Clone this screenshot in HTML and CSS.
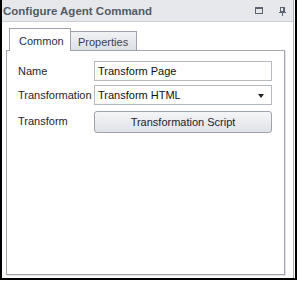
FILE: index.html
```html
<!DOCTYPE html>
<html>
<head>
<meta charset="utf-8">
<link rel="stylesheet" href="styles.css">
</head>
<body>
<div class="window">
  <div class="inner">
    <div class="titlebar">
      <span class="title">Configure Agent Command</span>
      <span class="tools">
        <svg class="ico" width="8" height="7" viewBox="0 0 8 7"><rect x="0.5" y="0.5" width="7" height="6" fill="none" stroke="#5d6471"/><rect x="0" y="0" width="8" height="2" fill="#5d6471"/></svg>
        <svg class="ico pin" width="7" height="9" viewBox="0 0 7 9"><rect x="1.5" y="0.5" width="4" height="4" fill="none" stroke="#5d6471"/><rect x="4" y="1" width="1" height="4" fill="#5d6471"/><rect x="0" y="5" width="7" height="1" fill="#5d6471"/><rect x="3" y="6" width="1" height="3" fill="#5d6471"/></svg>
      </span>
    </div>
    <div class="content">
      <div class="tabs">
        <div class="tab active">Common</div>
        <div class="tab">Properties</div>
      </div>
      <div class="panel">
        <div class="form">
          <label class="lbl">Name</label>
          <div class="field">Transform Page</div>
          <label class="lbl">Transformation</label>
          <div class="field select">Transform HTML<span class="arrow"></span></div>
          <label class="lbl">Transform</label>
          <div class="button">Transformation Script</div>
        </div>
      </div>
    </div>
  </div>
</div>
</body>
</html>
```
FILE: styles.css
```css
html, body {
  margin: 0;
  padding: 0;
  background: #ffffff;
}
body {
  font-family: "Liberation Sans", Arial, sans-serif;
  font-size: 11px;
  color: #1c1c1c;
}
.window {
  width: 293px;
  height: 278px;
  border-left: 2px solid #000;
  border-right: 2px solid #000;
  border-bottom: 2px solid #000;
  display: flex;
}
.inner {
  width: 291px;
  border-right: 1px solid #a9adb5;
  display: flex;
  flex-direction: column;
}
.titlebar {
  height: 21px;
  background: #e6e8ec;
  border-bottom: 1px solid #cdd0d6;
  display: flex;
  align-items: center;
  justify-content: space-between;
  padding: 0 7px 0 1px;
}
.title {
  font-weight: bold;
  font-size: 11.5px;
  color: #525a68;
}
.tools {
  display: flex;
  align-items: center;
  gap: 16px;
}
.ico { display: block; }
.pin { margin-top: 2px; }
.content {
  flex: 1;
  padding: 6px 8px 3px 4px;
  display: flex;
  flex-direction: column;
}
.tabs {
  display: flex;
  align-items: flex-end;
  padding-left: 3px;
  margin-bottom: -1px;
  position: relative;
  z-index: 1;
}
.tab {
  box-sizing: border-box;
  border: 1px solid #9fa2aa;
  border-bottom: none;
  font-size: 11px;
  color: #2a2f3a;
}
.tab.active {
  width: 62px;
  height: 23px;
  background: #fff;
  padding: 6px 0 0 9px;
}
.tab:not(.active) {
  width: 66px;
  height: 20px;
  border-left: none;
  border-bottom: 1px solid #9fa2aa;
  background: linear-gradient(#f1f2f5, #dcdfe5);
  padding: 4px 0 0 7px;
  color: #3c4250;
}
.panel {
  flex: 1;
  border: 1px solid #a4a7af;
  box-shadow: 1px 1px 0 #dfe0e3;
  padding: 10px 11px 0 11px;
}
.form {
  display: grid;
  grid-template-columns: 76px 178px;
  row-gap: 4px;
  align-items: center;
}
.lbl {
  font-size: 11px;
  color: #1f2430;
}
.field {
  box-sizing: border-box;
  height: 20px;
  border: 1px solid #b5b8bf;
  padding: 3px 0 0 3px;
  font-size: 11px;
  color: #111;
  position: relative;
}
.arrow {
  position: absolute;
  right: 7px;
  top: 8px;
  width: 0;
  height: 0;
  border-left: 3.5px solid transparent;
  border-right: 3.5px solid transparent;
  border-top: 4px solid #222;
}
.button {
  box-sizing: border-box;
  height: 22px;
  margin-top: 2px;
  border: 1px solid #9ea2ab;
  border-radius: 3px;
  background: linear-gradient(#f4f5f7, #dfe2e7);
  text-align: center;
  padding-top: 4px;
  font-size: 11px;
  color: #1d222c;
}
```
